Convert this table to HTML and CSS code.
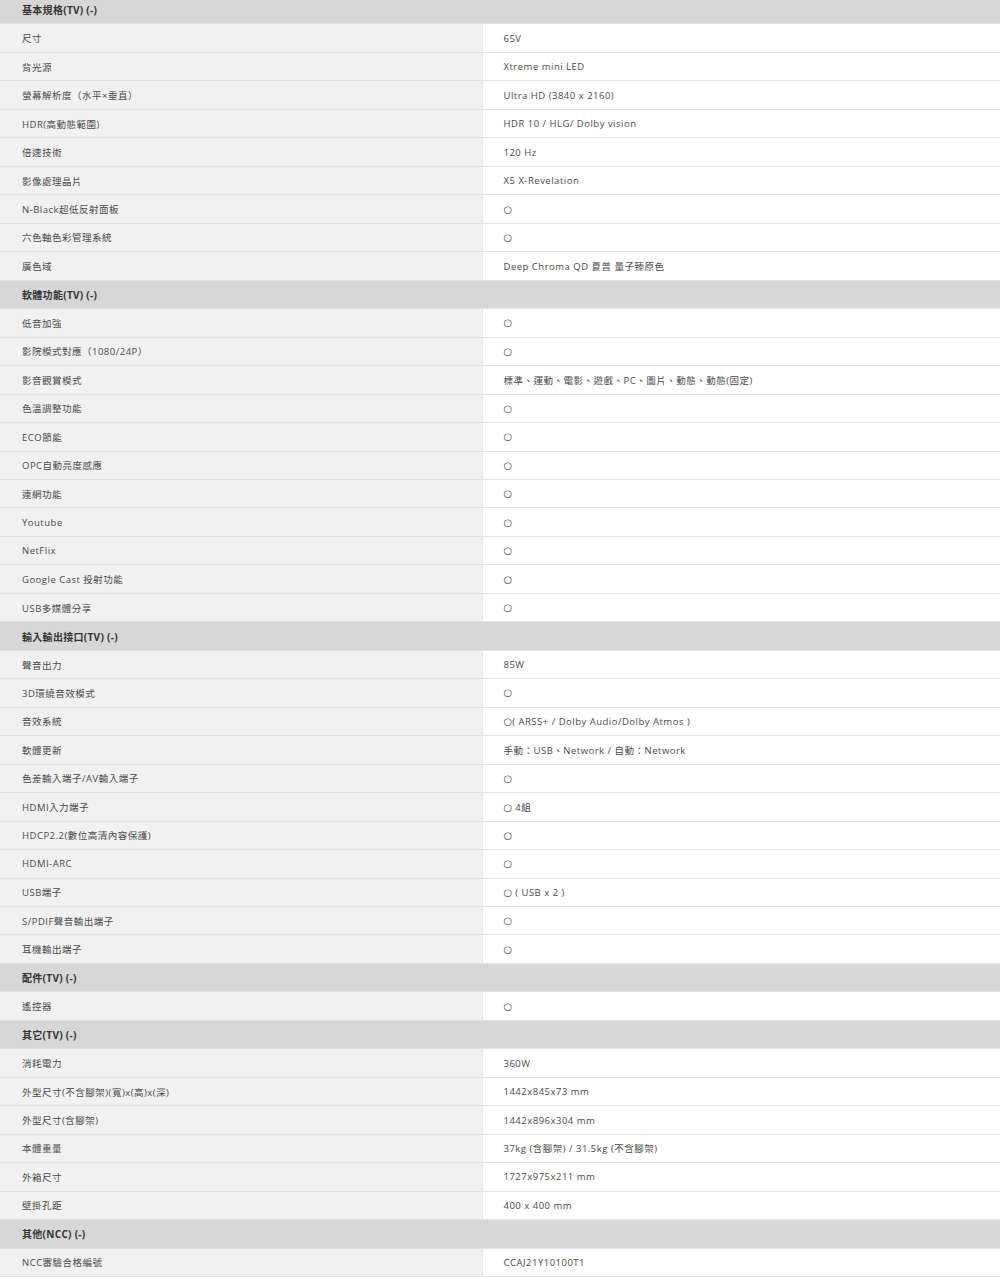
FILE: index.html
```html
<!DOCTYPE html>
<html lang="zh-Hant">

<head>
    <meta charset="UTF-8">
    <meta name="viewport" content="width=device-width, initial-scale=1.0">
    <title>規格表</title>
    <link rel="stylesheet" href="styles.css">
</head>

<body>
    <table class="spec-table">
        <colgroup>
            <col class="col-name">
            <col class="col-value">
        </colgroup>
        <tbody>
            <tr class="spec-group"><td colspan="2">基本規格(TV) (-)</td></tr>
            <tr><td>尺寸</td><td>65V</td></tr>
            <tr><td>背光源</td><td>Xtreme mini LED</td></tr>
            <tr><td>螢幕解析度（水平×垂直）</td><td>Ultra HD (3840 x 2160)</td></tr>
            <tr><td>HDR(高動態範圍)</td><td>HDR 10 / HLG/ Dolby vision</td></tr>
            <tr><td>倍速技術</td><td>120 Hz</td></tr>
            <tr><td>影像處理晶片</td><td>X5 X-Revelation</td></tr>
            <tr><td>N-Black超低反射面板</td><td><span class="mark">○</span></td></tr>
            <tr><td>六色軸色彩管理系統</td><td><span class="mark">○</span></td></tr>
            <tr><td>廣色域</td><td>Deep Chroma QD 夏普 量子臻原色</td></tr>

            <tr class="spec-group"><td colspan="2">軟體功能(TV) (-)</td></tr>
            <tr><td>低音加強</td><td><span class="mark">○</span></td></tr>
            <tr><td>影院模式對應（1080/24P）</td><td><span class="mark">○</span></td></tr>
            <tr><td>影音觀賞模式</td><td>標準、運動、電影、遊戲、PC、圖片、動態、動態(固定)</td></tr>
            <tr><td>色溫調整功能</td><td><span class="mark">○</span></td></tr>
            <tr><td>ECO節能</td><td><span class="mark">○</span></td></tr>
            <tr><td>OPC自動亮度感應</td><td><span class="mark">○</span></td></tr>
            <tr><td>連網功能</td><td><span class="mark">○</span></td></tr>
            <tr><td>Youtube</td><td><span class="mark">○</span></td></tr>
            <tr><td>NetFlix</td><td><span class="mark">○</span></td></tr>
            <tr><td>Google Cast 投射功能</td><td><span class="mark">○</span></td></tr>
            <tr><td>USB多媒體分享</td><td><span class="mark">○</span></td></tr>

            <tr class="spec-group"><td colspan="2">輸入輸出接口(TV) (-)</td></tr>
            <tr><td>聲音出力</td><td>85W</td></tr>
            <tr><td>3D環繞音效模式</td><td><span class="mark">○</span></td></tr>
            <tr><td>音效系統</td><td><span class="mark">○</span>( ARSS+ / Dolby Audio/Dolby Atmos )</td></tr>
            <tr><td>軟體更新</td><td>手動：USB、Network / 自動：Network</td></tr>
            <tr><td>色差輸入端子/AV輸入端子</td><td><span class="mark">○</span></td></tr>
            <tr><td>HDMI入力端子</td><td><span class="mark">○</span> 4組</td></tr>
            <tr><td>HDCP2.2(數位高清內容保護)</td><td><span class="mark">○</span></td></tr>
            <tr><td>HDMI-ARC</td><td><span class="mark">○</span></td></tr>
            <tr><td>USB端子</td><td><span class="mark">○</span> ( USB x 2 )</td></tr>
            <tr><td>S/PDIF聲音輸出端子</td><td><span class="mark">○</span></td></tr>
            <tr><td>耳機輸出端子</td><td><span class="mark">○</span></td></tr>

            <tr class="spec-group"><td colspan="2">配件(TV) (-)</td></tr>
            <tr><td>遙控器</td><td><span class="mark">○</span></td></tr>

            <tr class="spec-group"><td colspan="2">其它(TV) (-)</td></tr>
            <tr><td>消耗電力</td><td>360W</td></tr>
            <tr><td>外型尺寸(不含腳架)(寬)x(高)x(深)</td><td>1442x845x73 mm</td></tr>
            <tr><td>外型尺寸(含腳架)</td><td>1442x896x304 mm</td></tr>
            <tr><td>本體重量</td><td>37kg (含腳架) / 31.5kg (不含腳架)</td></tr>
            <tr><td>外箱尺寸</td><td>1727x975x211 mm</td></tr>
            <tr><td>壁掛孔距</td><td>400 x 400 mm</td></tr>

            <tr class="spec-group"><td colspan="2">其他(NCC) (-)</td></tr>
            <tr><td>NCC審驗合格編號</td><td>CCAJ21Y10100T1</td></tr>
        </tbody>
    </table>
</body>

</html>
```

FILE: styles.css
```css
* {
    font-family: "Open Sans", "Noto Sans CJK TC", sans-serif;
    margin: 0;
    padding: 0;
    box-sizing: border-box;
}

body {
    background: #ffffff;
}

.spec-table {
    width: 1000px;
    margin-top: -5px;
    border-collapse: collapse;
    table-layout: fixed;
}

.col-name {
    width: 482px;
}

.col-value {
    width: 518px;
}

.spec-table td {
    height: 28.48px;
    padding: 0 0 0 22px;
    font-size: 9.5px;
    letter-spacing: 0.5px;
    color: #4a4a4a;
    vertical-align: middle;
    border-top: 1px solid #fbfbfb;
    border-bottom: 1px solid #e3e3e3;
    white-space: nowrap;
    background: #f1f1f1;
}

.spec-table td + td {
    padding-left: 21px;
    background: #ffffff;
    border-left: 1px solid #e6e6e6;
}

.spec-group td {
    background: #d7d7d7;
    color: #333333;
    font-size: 10px;
    letter-spacing: 0.3px;
    font-weight: bold;
}

.mark {
    font-family: "DejaVu Sans", sans-serif;
    font-size: 10px;
    letter-spacing: 0;
    color: #444444;
}
```
